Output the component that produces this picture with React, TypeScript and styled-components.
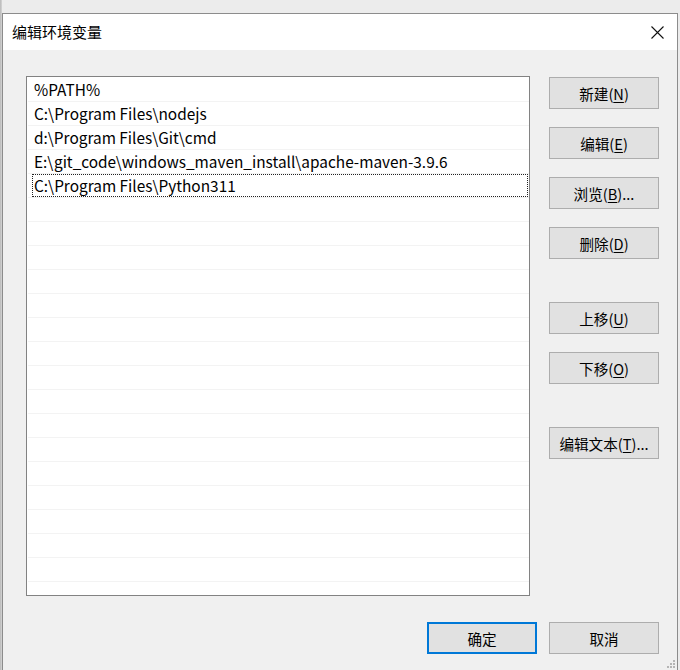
import React from "react";
import styled, { createGlobalStyle } from "styled-components";

const GlobalStyle = createGlobalStyle`
  html, body { margin: 0; padding: 0; background: #ececec; }
  body { font-family: "Noto Sans CJK SC", "Noto Sans", sans-serif; color: #000; }
`;

const Page = styled.div`
  width: 680px;
  height: 670px;
  box-sizing: border-box;
  padding: 13px 2px 0 2px;
  display: flex;
  overflow: hidden;
  background: linear-gradient(to right, #b8b8b8 0, #d6d6d6 2px, #ececec 2px);
`;

const Dialog = styled.div`
  position: relative;
  flex: 1;
  display: flex;
  flex-direction: column;
  border: 1px solid #8c8c8c;
  border-bottom: none;
  background: #f0f0f0;
`;

const TitleBar = styled.div`
  height: 36px;
  background: #ffffff;
  display: flex;
  align-items: center;
  justify-content: space-between;
  padding-left: 9px;
`;

const Title = styled.span`
  font-size: 15px;
  line-height: 20px;
  color: #000;
`;

const CloseButton = styled.div`
  width: 40px;
  height: 36px;
  display: flex;
  align-items: center;
  justify-content: center;
`;

const Body = styled.div`
  flex: 1;
  display: flex;
  flex-direction: column;
  padding: 26px 18px 0 23px;
`;

const Main = styled.div`
  display: flex;
  gap: 19px;
`;

const List = styled.div`
  width: 504px;
  height: 520px;
  box-sizing: border-box;
  border: 1px solid #828282;
  background: #fff;
  padding-top: 1px;
  overflow: hidden;
`;

const Row = styled.div`
  height: 24px;
  box-sizing: border-box;
  border-bottom: 1px solid #f3f3f3;
  padding: 0 1px 0 4px;
  margin-left: 1px;
  display: flex;
`;

const Cell = styled.div<{ $focused?: boolean }>`
  flex: 1;
  height: 23px;
  box-sizing: border-box;
  border: 1px dotted ${(p) => (p.$focused ? "#222" : "transparent")};
  padding-left: 1px;
  font-size: 15.4px;
  line-height: 21px;
  white-space: nowrap;
  color: #000;
`;

const Side = styled.div`
  display: flex;
  flex-direction: column;
  padding-top: 1px;
`;

const Button = styled.div<{ $gap?: number; $primary?: boolean }>`
  width: 110px;
  height: 32px;
  box-sizing: border-box;
  margin-top: ${(p) => p.$gap ?? 0}px;
  background: #e1e1e1;
  border: ${(p) => (p.$primary ? "2px solid #0078d7" : "1px solid #adadad")};
  display: flex;
  align-items: center;
  justify-content: center;
  font-size: 14.6px;
  color: #000;
  white-space: nowrap;
`;

const Key = styled.span`
  text-decoration: underline;
  text-underline-offset: 2px;
`;

const Footer = styled.div`
  display: flex;
  justify-content: flex-end;
  gap: 12px;
  margin-top: 26px;
`;

const Grip = styled.svg`
  position: absolute;
  right: 1px;
  bottom: 1px;
`;

const entries = [
  "%PATH%",
  "C:\\Program Files\\nodejs",
  "d:\\Program Files\\Git\\cmd",
  "E:\\git_code\\windows_maven_install\\apache-maven-3.9.6",
  "C:\\Program Files\\Python311",
];

const rows = Array.from({ length: 22 }, (_, i) => entries[i] ?? "");

const sideButtons: { label: string; key: string; suffix?: string; gap: number }[] = [
  { label: "新建", key: "N", gap: 0 },
  { label: "编辑", key: "E", gap: 18 },
  { label: "浏览", key: "B", suffix: "...", gap: 18 },
  { label: "删除", key: "D", gap: 18 },
  { label: "上移", key: "U", gap: 43 },
  { label: "下移", key: "O", gap: 18 },
  { label: "编辑文本", key: "T", suffix: "...", gap: 43 },
];

export default function App() {
  return (
    <>
      <GlobalStyle />
      <Page>
        <Dialog>
          <TitleBar>
            <Title>编辑环境变量</Title>
            <CloseButton>
              <svg width="13" height="13" viewBox="0 0 13 13">
                <path d="M0.5 0.5 L12.5 12.5 M12.5 0.5 L0.5 12.5" stroke="#111" strokeWidth="1.1" fill="none" />
              </svg>
            </CloseButton>
          </TitleBar>
          <Body>
            <Main>
              <List>
                {rows.map((text, i) => (
                  <Row key={i}>
                    <Cell $focused={i === 4}>{text}</Cell>
                  </Row>
                ))}
              </List>
              <Side>
                {sideButtons.map((b) => (
                  <Button key={b.key} $gap={b.gap}>
                    {b.label}(<Key>{b.key}</Key>){b.suffix ?? ""}
                  </Button>
                ))}
              </Side>
            </Main>
            <Footer>
              <Button $primary>确定</Button>
              <Button>取消</Button>
            </Footer>
          </Body>
          <Grip width="10" height="10" viewBox="0 0 10 10">
            <rect x="7" y="1" width="2" height="2" fill="#b5b5b5" />
            <rect x="4" y="4" width="2" height="2" fill="#b5b5b5" />
            <rect x="7" y="4" width="2" height="2" fill="#b5b5b5" />
            <rect x="1" y="7" width="2" height="2" fill="#b5b5b5" />
            <rect x="4" y="7" width="2" height="2" fill="#b5b5b5" />
            <rect x="7" y="7" width="2" height="2" fill="#b5b5b5" />
          </Grip>
        </Dialog>
      </Page>
    </>
  );
}
